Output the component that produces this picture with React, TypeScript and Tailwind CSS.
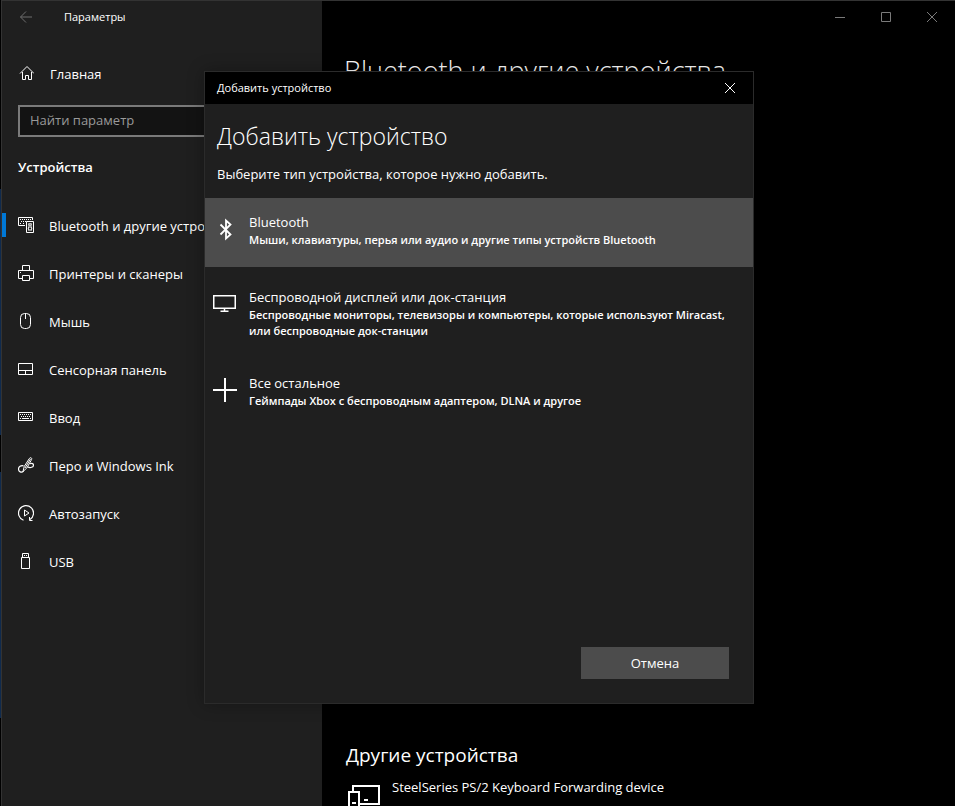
import { useState } from 'react'
import type { ReactNode } from 'react'
import clsx from 'clsx'

type NavItem = {
  id: string
  label: string
  icon: ReactNode
}

type DeviceType = {
  id: string
  title: string
  description: string
  icon: ReactNode
}

function Icon({ size = 16, children }: { size?: number; children: ReactNode }) {
  return (
    <svg width={size} height={size} viewBox={`0 0 ${size} ${size}`} fill="none" stroke="currentColor" aria-hidden="true" className="shrink-0">
      {children}
    </svg>
  )
}

const navItems: NavItem[] = [
  {
    id: 'bluetooth',
    label: 'Bluetooth и другие устройства',
    icon: (
      <Icon>
        <path d="M7 8.5H.5v-8h14V3" />
        <path d="M2 2.5h11M3 4.5h5M2 6.5h2M5 6.5h2" strokeDasharray="1 1" />
        <path d="M8.5 4.5h7v11h-7z" />
        <circle cx="12" cy="7.5" r="1" />
        <circle cx="12" cy="11.5" r="1.7" />
        <path d="M10.5 6v8M13.5 6v8" strokeOpacity=".5" />
      </Icon>
    ),
  },
  {
    id: 'printers',
    label: 'Принтеры и сканеры',
    icon: (
      <Icon>
        <path d="M4.5 5.5v-5h7v5M4.5 13.5h-4v-8h15v8h-4M4.5 10.5h7v5h-7zM2 7.5h1" />
      </Icon>
    ),
  },
  {
    id: 'mouse',
    label: 'Мышь',
    icon: (
      <Icon>
        <rect x="2.5" y=".5" width="10" height="15" rx="4" />
        <path d="M7.5 1v5" />
      </Icon>
    ),
  },
  {
    id: 'touchpad',
    label: 'Сенсорная панель',
    icon: (
      <Icon>
        <path d="M.5 2.5h14v11H.5zM.5 9.5h14M7.5 9.5v4" />
      </Icon>
    ),
  },
  {
    id: 'typing',
    label: 'Ввод',
    icon: (
      <Icon>
        <path d="M.5 3.5h14v8H.5z" />
        <path d="M2 5.5h11M3 7.5h10" strokeDasharray="1 1" />
        <path d="M2 9.5h1M4 9.5h7M12 9.5h1" />
      </Icon>
    ),
  },
  {
    id: 'pen',
    label: 'Перо и Windows Ink',
    icon: (
      <Icon>
        <path d="M5 14.5 6.2 9.5 11 2c.6-1 1.5-1.6 2.2-1.2.8.5.6 1.5 0 2.5L8.8 11zM12.5 2 7 11" />
        <path d="M5.5 8.8C3 8.2.5 9.5.5 12c0 2.700 3 4.300 5 2.200M9.800 10c2.500 1.200 5.700.2 5.700-1.800 0-1.500-1.500-2.200-3.500-1.400" strokeWidth="1.200" />
      </Icon>
    ),
  },
  {
    id: 'autoplay',
    label: 'Автозапуск',
    icon: (
      <Icon>
        <path d="M5.500 15.200A7.500 7.500 0 1 1 12 14.500" strokeWidth="1.200" />
        <path d="M14.500 15.500H11.500V12" />
        <path d="M6.500 5v6l4.500-3z" />
      </Icon>
    ),
  },
  {
    id: 'usb',
    label: 'USB',
    icon: (
      <Icon>
        <path d="M4.500 4.500v-4h6v4M3.500 4.500h8v11h-8zM6 2.500h1M8 2.500h1" />
      </Icon>
    ),
  },
]

const deviceTypes: DeviceType[] = [
  {
    id: 'bluetooth',
    title: 'Bluetooth',
    description: 'Мыши, клавиатуры, перья или аудио и другие типы устройств Bluetooth',
    icon: (
      <Icon size={24}>
        <path d="M7.500 7.500 17.500 17.500 13 21.500V3.500l4.500 4L7.500 17.500" strokeWidth="1.800" />
      </Icon>
    ),
  },
  {
    id: 'display',
    title: 'Беспроводной дисплей или док-станция',
    description: 'Беспроводные мониторы, телевизоры и компьютеры, которые используют Miracast, или беспроводные док-станции',
    icon: (
      <Icon size={24}>
        <path d="M.75 3.750h21.500v12.500H.75z" strokeWidth="1.500" />
        <path d="M11.500 17v2M7.500 19.250h8" strokeWidth="1.500" />
      </Icon>
    ),
  },
  {
    id: 'other',
    title: 'Все остальное',
    description: 'Геймпады Xbox с беспроводным адаптером, DLNA и другое',
    icon: (
      <Icon size={24}>
        <path d="M12 0v24M0 12h24" strokeWidth="2" />
      </Icon>
    ),
  },
]

function CloseGlyph() {
  return (
    <Icon size={12}>
      <path d="M1 1l10 10M11 1 1 11" />
    </Icon>
  )
}

function Sidebar({ active, onSelect }: { active: string; onSelect: (id: string) => void }) {
  return (
    <aside className="flex w-80 shrink-0 flex-col bg-[#1f1f1f]">
      <div className="flex h-8 items-center">
        <button aria-label="Назад" className="flex h-8 w-12 items-center justify-center text-[#6e6e6e]">
          <Icon>
            <path d="M14 8H2.500M8 2.500 2.500 8 8 13.500" />
          </Icon>
        </button>
        <span className="pl-3.5 text-[11px] font-medium">Параметры</span>
      </div>

      <button className="mt-4 flex h-12 items-center gap-4 pl-4 text-left">
        <Icon>
          <path d="M4.500 7v7.500h3v-4h3v4h3V7M2 8.500l7-7 7 7" />
        </Icon>
        <span className="pt-0.5">Главная</span>
      </button>

      <div className="mt-2 px-4">
        <input
          type="text"
          aria-label="Найти параметр"
          placeholder="Найти параметр"
          className="h-8 w-full border-2 border-[#7a7a7a] bg-[#131313] px-2.5 pb-0.5 outline-none placeholder:text-[#9a9a9a]"
        />
      </div>

      <h2 className="mt-5 px-4 font-semibold">Устройства</h2>

      <nav className="mt-6 flex flex-col">
        {navItems.map(item => (
          <button
            key={item.id}
            onClick={() => onSelect(item.id)}
            className="relative flex h-12 items-center gap-[15px] pl-4 text-left whitespace-nowrap"
          >
            {item.id === active && <span className="absolute left-0 h-6 w-1 bg-[#0078d7]" />}
            {item.icon}
            <span className="pt-0.5">{item.label}</span>
          </button>
        ))}
      </nav>
    </aside>
  )
}

function MainPane() {
  return (
    <main className="flex min-w-0 flex-1 flex-col bg-black">
      <div className="flex h-8 justify-end text-[#7a7a7a]">
        <button aria-label="Свернуть" className="flex w-[46px] items-center justify-center">
          <Icon size={12}><path d="M1 6.500h10" /></Icon>
        </button>
        <button aria-label="Развернуть" className="flex w-[46px] items-center justify-center">
          <Icon size={12}><path d="M1.500 1.500h9v9h-9z" /></Icon>
        </button>
        <button aria-label="Закрыть окно" className="flex w-[46px] items-center justify-center">
          <CloseGlyph />
        </button>
      </div>

      <div className="flex flex-1 flex-col justify-between pt-[18px] pl-[22px]">
        <h1 className="text-[27px] leading-10 font-light whitespace-nowrap">Bluetooth и другие устройства</h1>

        <section className="h-[67px] overflow-hidden pl-0.5">
          <h2 className="text-[19px] leading-8">Другие устройства</h2>
          <div className="mt-1.5 flex gap-3">
            <svg width="32" height="28" viewBox="0 0 32 28" fill="none" stroke="currentColor" strokeWidth="2" aria-hidden="true" className="mt-2 ml-0.5 shrink-0">
              <path d="M5 6V1h26v18H12M1 7h10v20H1zM4 18h4M16 15h4" />
            </svg>
            <span className="whitespace-nowrap">SteelSeries PS/2 Keyboard Forwarding device</span>
          </div>
        </section>
      </div>
    </main>
  )
}

function AddDeviceDialog({ onClose }: { onClose: () => void }) {
  const [selected, setSelected] = useState('bluetooth')

  return (
    <div
      role="dialog"
      aria-label="Добавить устройство"
      className="flex h-[633px] w-[550px] flex-col border border-[#2b2b2b] bg-[#1f1f1f] shadow-[0_0_16px_rgba(0,0,0,0.3)]"
    >
      <div className="flex h-8 shrink-0 items-center justify-between bg-black pl-3">
        <span className="text-[11px] font-medium">Добавить устройство</span>
        <button aria-label="Закрыть" onClick={onClose} className="flex h-8 w-[46px] items-center justify-center">
          <CloseGlyph />
        </button>
      </div>

      <div className="px-3 pt-3.5">
        <h1 className="text-[23px] leading-9 font-light">Добавить устройство</h1>
        <p className="mt-2.5">Выберите тип устройства, которое нужно добавить.</p>
      </div>

      <div className="mt-3.5 flex flex-col gap-1.5">
        {deviceTypes.map(d => (
          <button
            key={d.id}
            onClick={() => setSelected(d.id)}
            className={clsx('flex min-h-[69px] items-start gap-3 py-3.5 pr-4 pl-2 text-left', d.id === selected && 'bg-[#4c4c4c]')}
          >
            <span className="pt-[5px]">{d.icon}</span>
            <span className="flex flex-col">
              <span>{d.title}</span>
              <span className="text-[11px] leading-4 font-semibold">{d.description}</span>
            </span>
          </button>
        ))}
      </div>

      <div className="mt-auto flex justify-end px-6 pb-6">
        <button onClick={onClose} className="h-8 w-[148px] bg-[#4c4c4c]">Отмена</button>
      </div>
    </div>
  )
}

export default function App() {
  const [active, setActive] = useState('bluetooth')
  const [dialogOpen, setDialogOpen] = useState(true)

  return (
    <div className="flex h-screen overflow-hidden bg-black font-['Open_Sans','Noto_Sans',sans-serif] text-[13px] leading-5 text-white">
      {/* strip of the desktop left of the window */}
      <div className="flex w-px shrink-0 flex-col gap-[37px] pt-[189px]">
        <div className="h-[246px] bg-[#0f2a4d]" />
        <div className="h-[246px] bg-[#0f2a4d]" />
      </div>

      <div className="relative flex min-w-0 flex-1 border-t border-l border-[#333]">
        <Sidebar active={active} onSelect={setActive} />
        <MainPane />

        {dialogOpen && (
          <div className="absolute inset-0 flex items-start justify-center pt-[70px] pl-px">
            <AddDeviceDialog onClose={() => setDialogOpen(false)} />
          </div>
        )}
      </div>
    </div>
  )
}
